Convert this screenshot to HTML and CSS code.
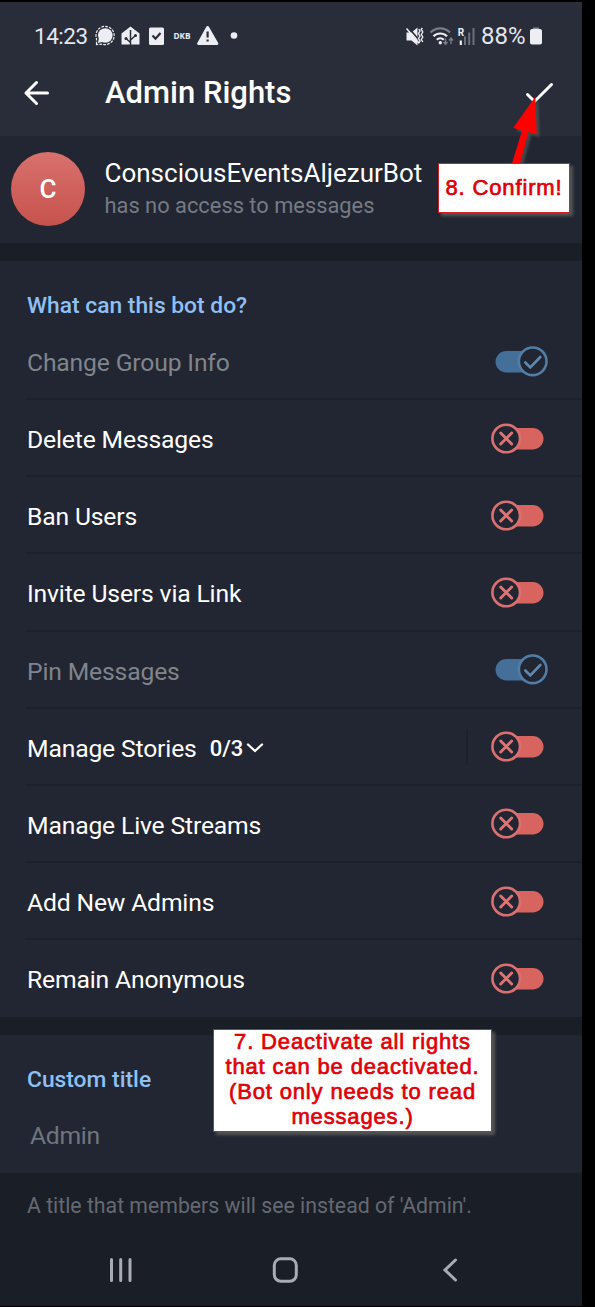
FILE: index.html
```html
<!DOCTYPE html>
<html lang="en">
<head>
<meta charset="utf-8">
<title>Admin Rights</title>
<link rel="stylesheet" href="styles.css">
</head>
<body>
<svg class="defs" width="0" height="0" aria-hidden="true">
  <symbol id="on" viewBox="0 0 58 32">
    <rect x="4.500" y="5" width="40" height="21.500" rx="10.750" fill="#446f99"/>
    <circle cx="41.700" cy="15.300" r="13.800" fill="#212632" stroke="#527da6" stroke-width="2.600"/>
    <path d="M34.300 16.500l5 5L49.300 11" fill="none" stroke="#6088ae" stroke-width="2.600" stroke-linecap="round"/>
  </symbol>
  <symbol id="off" viewBox="0 0 58 32">
    <rect x="12.500" y="5" width="40" height="21.500" rx="10.750" fill="#d8645f"/>
    <circle cx="15.200" cy="15.500" r="13.800" fill="#212632" stroke="#da7070" stroke-width="2.600"/>
    <path d="M9.700 10l11 11M20.700 10l-11 11" fill="none" stroke="#de7474" stroke-width="2.900" stroke-linecap="round"/>
  </symbol>
</svg>
<div class="phone">
  <header class="top">
    <div class="status">
      <span class="time">14:23</span>
      <svg class="notif" width="150" height="24" viewBox="0 0 150 24">
        <g fill="#eceef3">
          <circle cx="14.300" cy="11.500" r="7.300"/>
          <path d="M6.800 19l1.500-6 5 4.500z"/>
          <path d="M30.500 9.500L39.500 2.500l9 7V20.500h-18z"/>
          <rect x="58" y="3.500" width="15" height="17.500" rx="1.500"/>
          <path d="M115.300 2.700a1.500 1.500 0 0 1 2.600 0l9.300 16.200a1.300 1.300 0 0 1-1.200 2h-18.500a1.300 1.300 0 0 1-1.200-2z"/>
          <circle cx="143" cy="11.500" r="3.300"/>
        </g>
        <path d="M5.500 20.500v-6A9.100 9.100 0 1 1 11.500 20.200z" fill="none" stroke="#eceef3" stroke-width="1.200" stroke-dasharray="2.700 1.200"/>
        <g fill="none" stroke="#292d3a" stroke-width="1.500">
          <path d="M39.500 6v15M39.500 18.500l-4.500-4M39.500 16l5-4.500"/>
          <path d="M61.500 11.500l3 3.200 5-5.700" stroke-width="2.200"/>
          <path d="M116.600 7.500v6M116.600 15.500v2" stroke-width="2.200"/>
        </g>
        <g fill="#292d3a"><circle cx="35" cy="14.500" r="1.500"/><circle cx="44.500" cy="11.500" r="1.500"/></g>
        <text class="dkb" x="82.500" y="15" textLength="17" lengthAdjust="spacingAndGlyphs">DKB</text>
      </svg>
      <svg class="radio" width="74" height="24" viewBox="0 0 74 24">
        <path d="M1.500 8.500h5l6-5v18l-6-5h-5z" fill="#eceef3"/>
        <path d="M3 3l11 13" stroke="#292d3a" stroke-width="1.600"/>
        <path d="M1.500 4.500L14 19" stroke="#eceef3" stroke-width="1.600"/>
        <path d="M13.800 5l1.200 2-1.500 2.500 1.500 2.500-1.500 2.500 1.500 2.500-1.500 2.500M17.300 4l-1 1.500 1.500 2.500-1.500 2.500 1.500 2.500-1.500 2.500 1.500 2.500" fill="none" stroke="#eceef3" stroke-width="1.400"/>
        <g fill="none" stroke-width="2.200">
          <path d="M25.500 8.500a13.500 13.500 0 0 1 19.500 0" stroke="#787c86"/>
          <path d="M28.500 12.300a9.500 9.500 0 0 1 13.500 0M31.800 15.700a5 5 0 0 1 7 0" stroke="#eceef3"/>
        </g>
        <circle cx="35.300" cy="18.800" r="1.700" fill="#eceef3"/>
        <path d="M40.500 14.500v6M38.500 18l2 2.500 2-2.500M46 20v-6M44 16.500l2-2.500 2 2.500" fill="none" stroke="#787c86" stroke-width="1.400"/>
        <text class="roam" x="52.800" y="11.500">R</text>
        <path d="M55.800 16.500v4.500" stroke="#eceef3" stroke-width="2.200"/>
        <path d="M60 12.500v8.500M64.200 8.500v12.500M68.500 4v17" stroke="#6c707b" stroke-width="2"/>
      </svg>
      <span class="pct">88%</span>
      <svg class="batt" width="14" height="20" viewBox="0 0 14 20"><path d="M4 1.500h6v2H4z" fill="#858994"/><rect x="1" y="3" width="12" height="15.500" rx="2" fill="#eceef3"/></svg>
    </div>
    <div class="bar">
      <svg class="back" width="28" height="28" viewBox="0 0 28 28"><path d="M25.500 14H4M14.500 3.500L4 14l10.500 10.500" fill="none" stroke="#fff" stroke-width="3" stroke-linecap="round" stroke-linejoin="round"/></svg>
      <h1 class="title">Admin Rights</h1>
      <svg class="done" width="30" height="24" viewBox="0 0 30 24"><path d="M3.500 13.500l7 7L27.500 3.500" fill="none" stroke="#fff" stroke-width="3" stroke-linecap="round"/></svg>
    </div>
  </header>

  <section class="profile">
    <div class="avatar">C</div>
    <div class="who">
      <div class="name">ConsciousEventsAljezurBot</div>
      <div class="sub">has no access to messages</div>
    </div>
  </section>

  <section class="rights">
    <h2 class="heading">What can this bot do?</h2>
    <div class="row locked"><span class="label">Change Group Info</span><svg class="toggle"><use href="#on"/></svg></div>
    <div class="row"><span class="label">Delete Messages</span><svg class="toggle"><use href="#off"/></svg></div>
    <div class="row"><span class="label">Ban Users</span><svg class="toggle"><use href="#off"/></svg></div>
    <div class="row"><span class="label">Invite Users via Link</span><svg class="toggle"><use href="#off"/></svg></div>
    <div class="row locked"><span class="label">Pin Messages</span><svg class="toggle"><use href="#on"/></svg></div>
    <div class="row"><span class="label">Manage Stories</span><span class="count">0/3</span><svg class="chev" width="18" height="12" viewBox="0 0 18 12"><path d="M2 2.500l7 6.500 7-6.500" fill="none" stroke="#fff" stroke-width="2.300" stroke-linecap="round"/></svg><i class="divider"></i><svg class="toggle"><use href="#off"/></svg></div>
    <div class="row"><span class="label">Manage Live Streams</span><svg class="toggle"><use href="#off"/></svg></div>
    <div class="row"><span class="label">Add New Admins</span><svg class="toggle"><use href="#off"/></svg></div>
    <div class="row"><span class="label">Remain Anonymous</span><svg class="toggle"><use href="#off"/></svg></div>
  </section>

  <section class="custom">
    <h2 class="heading">Custom title</h2>
    <div class="field">Admin</div>
  </section>
  <p class="hint">A title that members will see instead of 'Admin'.</p>

  <nav class="nav">
    <svg width="26" height="28" viewBox="0 0 26 28"><path d="M3.500 3.500v21M12.700 3.500v21M22 3.500v21" stroke="#a9acb5" stroke-width="3" stroke-linecap="round"/></svg>
    <svg width="28" height="28" viewBox="0 0 28 28"><rect x="2.300" y="2.800" width="22" height="22.500" rx="6.500" fill="none" stroke="#a9acb5" stroke-width="3"/></svg>
    <svg width="26" height="28" viewBox="0 0 26 28"><path d="M17.500 4L7 14l10.500 10" fill="none" stroke="#a9acb5" stroke-width="3" stroke-linecap="round"/></svg>
  </nav>
</div>

<svg class="arrow" width="50" height="80" viewBox="0 0 50 80"><path d="M32.300 6.700L10.300 37.700l8.700 3L8.500 75h8L25.500 42l8.200 2.300z" fill="#f00"/></svg>
<div class="note confirm">8. Confirm!</div>
<div class="note deactivate"><span>7. Deactivate all rights</span><span>that can be deactivated.</span><span>(Bot only needs to read</span><span>messages.)</span></div>
</body>
</html>
```
FILE: styles.css
```css
body {
  margin: 0;
  width: 595px;
  height: 1307px;
  overflow: hidden;
  background: #000;
  color: #fff;
  font-family: Roboto, sans-serif;
}
.defs { position: absolute; }
svg { display: block; flex: none; }
.phone {
  display: flex;
  flex-direction: column;
  box-sizing: border-box;
  width: 582px;
  height: 1306px;
  padding-top: 2px;
  background: #1a1e26;
  background-clip: content-box;
}
.top { height: 134px; background: #292d3a; }
.status {
  display: flex;
  align-items: center;
  height: 24px;
  padding: 22px 39px 0 34px;
  color: #e4e6ee;
  white-space: nowrap;
}
.time { width: 57px; font-size: 22.500px; letter-spacing: -0.500px; }
.radio { margin-left: auto; }
.pct { width: 48px; margin-left: 2px; font-size: 24px; line-height: 24px; }
.dkb { font: bold 8px "Open Sans", sans-serif; fill: #eceef3; }
.roam { font: bold 10px Roboto, sans-serif; fill: #eceef3; }
.bar { display: flex; align-items: center; height: 46px; padding: 22px 28px 0 22px; }
.title { margin: 0 auto 0 55px; font-size: 31px; font-weight: 500; line-height: 40px; white-space: nowrap; }
.profile {
  display: flex;
  align-items: center;
  box-sizing: border-box;
  height: 107px;
  padding: 0 0 1px 11px;
  background: #212632;
}
.avatar {
  width: 74px;
  height: 74px;
  border-radius: 50%;
  background: linear-gradient(#d9716d, #c6524d);
  font-size: 26px;
  font-weight: 500;
  line-height: 74px;
  text-align: center;
}
.who { margin-left: 19.500px; white-space: nowrap; }
.name { font-size: 26px; line-height: 33px; }
.sub { font-size: 21.850px; line-height: 32px; color: #767a84; }
.rights { height: 756px; margin-top: 18px; background: #212632; }
.heading {
  box-sizing: border-box;
  height: 62px;
  margin: 0;
  padding: 30px 0 0 27px;
  color: #8fc0f5;
  font-size: 22.800px;
  font-weight: 500;
  line-height: 30px;
}
.row {
  display: flex;
  align-items: center;
  box-sizing: border-box;
  height: 77.150px;
  margin-left: 25px;
  padding: 2px 33px 0 2px;
  border-bottom: 2px solid #1c2029;
  font-size: 24.700px;
  white-space: nowrap;
}
.row:last-child { border-color: transparent; }
.label { padding-top: 2px; letter-spacing: -0.160px; }
.locked { color: #80848c; }
.toggle { width: 58px; height: 32px; margin-left: auto; }
.count { margin-left: 13px; padding-top: 2px; font-size: 22px; font-weight: 500; }
.chev { margin: 2px 0 0 3px; }
.divider { width: 2px; height: 36px; margin-left: auto; background: #1c2029; }
.divider + .toggle { margin-left: 23px; }
.custom { height: 138px; margin-top: 18px; background: #212632; }
.field { padding: 23px 0 0 30px; color: #71757e; font-size: 24.700px; line-height: 32px; letter-spacing: -0.300px; }
.hint { margin: 18px 0 0 27px; color: #656972; font-size: 21.250px; line-height: 30px; white-space: nowrap; }
.nav { display: flex; gap: 138px; margin-top: 35px; padding-left: 108px; }
.arrow { position: absolute; left: 503px; top: 90px; filter: drop-shadow(3px 3px 1px #555a); }
.note {
  position: absolute;
  display: flex;
  flex-direction: column;
  align-items: center;
  box-sizing: border-box;
  border: 1px solid #d41f2b;
  background: #fff;
  box-shadow: 3px 3px 3px #555;
  color: #e00008;
  font: 22px/25px "Liberation Sans", Arial, sans-serif;
  letter-spacing: 0.850px;
  -webkit-text-stroke: 0.700px #e00008;
  white-space: nowrap;
}
.confirm { left: 438px; top: 163px; width: 132px; height: 50px; line-height: 48px; }
.deactivate { left: 213px; top: 1029px; width: 279px; height: 103px; line-height: 25px; }
.deactivate span:first-child { margin-top: -1px; }
```
